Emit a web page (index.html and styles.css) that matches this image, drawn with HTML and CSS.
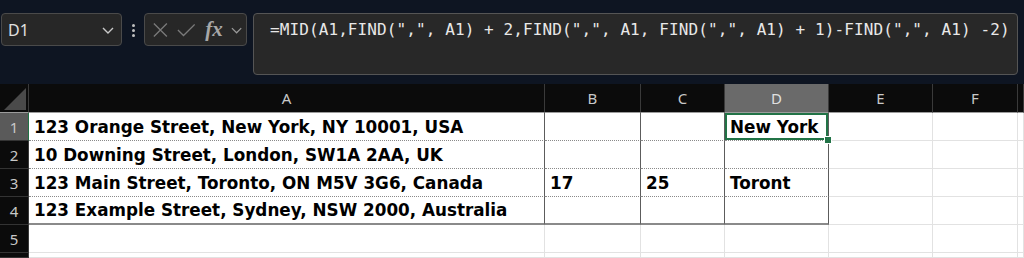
FILE: index.html
```html
<!DOCTYPE html>
<html lang="en">
<head>
   <meta charset="UTF-8" />
   <title>Sheet</title>
   <link rel="stylesheet" href="styles.css">
</head>
<body>

   <div class="topbar">
      <div class="namebox">
         <span>D1</span>
         <svg width="14" height="10" viewBox="0 0 14 10"><path d="M2 3 L7 8 L12 3" fill="none" stroke="#c8c8c8" stroke-width="1.4"/></svg>
      </div>
      <div class="dots"><i></i><i></i><i></i></div>
      <div class="fxbox">
         <svg width="18" height="18" viewBox="0 0 18 18"><path d="M2 2 L16 16 M16 2 L2 16" stroke="#7a7a7a" stroke-width="1.4"/></svg>
         <svg width="20" height="18" viewBox="0 0 20 18"><path d="M1 9 L7 15 L19 3" fill="none" stroke="#7a7a7a" stroke-width="1.4"/></svg>
         <span class="fx">fx</span>
         <svg width="12" height="10" viewBox="0 0 12 10"><path d="M1 3 L6 8 L11 3" fill="none" stroke="#9a9a9a" stroke-width="1.3"/></svg>
      </div>
      <div class="formula">=MID(A1,FIND(",", A1) + 2,FIND(",", A1, FIND(",", A1) + 1)-FIND(",", A1) -2)</div>
   </div>

   <div class="sheet">
      <div class="ch corner"><svg width="22" height="22" viewBox="0 0 22 22"><path d="M22 0 L22 22 L0 22 Z" fill="#4a4a4a"/></svg></div>
      <div class="ch">A</div>
      <div class="ch">B</div>
      <div class="ch">C</div>
      <div class="ch sel">D</div>
      <div class="ch">E</div>
      <div class="ch">F</div>
      <div class="ch"></div>

      <div class="rh sel">1</div>
      <div class="c d dot">123 Orange Street, New York, NY 10001, USA</div>
      <div class="c d dot"></div>
      <div class="c d dot"></div>
      <div class="c d dot active">New York</div>
      <div class="c"></div>
      <div class="c"></div>
      <div class="c"></div>

      <div class="rh">2</div>
      <div class="c d dot">10 Downing Street, London, SW1A 2AA, UK</div>
      <div class="c d dot"></div>
      <div class="c d dot"></div>
      <div class="c d dot"></div>
      <div class="c"></div>
      <div class="c"></div>
      <div class="c"></div>

      <div class="rh">3</div>
      <div class="c d dot">123 Main Street, Toronto, ON M5V 3G6, Canada</div>
      <div class="c d dot">17</div>
      <div class="c d dot">25</div>
      <div class="c d dot">Toront</div>
      <div class="c"></div>
      <div class="c"></div>
      <div class="c"></div>

      <div class="rh">4</div>
      <div class="c d last">123 Example Street, Sydney, NSW 2000, Australia</div>
      <div class="c d last"></div>
      <div class="c d last"></div>
      <div class="c d last"></div>
      <div class="c"></div>
      <div class="c"></div>
      <div class="c"></div>

      <div class="rh">5</div>
      <div class="c"></div>
      <div class="c"></div>
      <div class="c"></div>
      <div class="c"></div>
      <div class="c"></div>
      <div class="c"></div>
      <div class="c"></div>

      <div class="rh"></div>
      <div class="c"></div>
      <div class="c"></div>
      <div class="c"></div>
      <div class="c"></div>
      <div class="c"></div>
      <div class="c"></div>
      <div class="c"></div>
   </div>

</body>
</html>
```

FILE: styles.css
```css
* {
   margin: 0;
   padding: 0;
   box-sizing: border-box;
}
body {
   width: 1024px;
   height: 258px;
   overflow: hidden;
   background: #0e1522;
   font-family: "Noto Sans", Arial, sans-serif;
}
.topbar {
   display: flex;
   align-items: flex-start;
   height: 84px;
   padding: 13px 0 0 1px;
   background: #0e1522;
}
.namebox {
   display: flex;
   align-items: center;
   justify-content: space-between;
   width: 121px;
   height: 33px;
   padding: 0 6px 0 6px;
   background: #272727;
   border: 1px solid #4a4a4a;
   border-radius: 4px;
   color: #e0e0e0;
   font-size: 16px;
}
.dots {
   display: flex;
   flex-direction: column;
   gap: 2px;
   margin: 11px 9px 0 10px;
}
.dots i {
   display: block;
   width: 3px;
   height: 3px;
   background: #c0c0c0;
   border-radius: 50%;
}
.fxbox {
   display: flex;
   align-items: center;
   width: 103px;
   height: 33px;
   padding: 0 4px 0 7px;
   gap: 8px;
   background: #272727;
   border: 1px solid #4a4a4a;
   border-radius: 4px;
}
.fxbox .fx {
   font-family: "Liberation Serif", serif;
   font-style: italic;
   font-weight: bold;
   font-size: 21px;
   color: #a8a8a8;
   margin-left: 2px;
}
.formula {
   flex: 1;
   height: 62px;
   margin: 0 6px 0 6px;
   padding: 6px 0 0 16px;
   background: #282828;
   border: 1px solid #555;
   border-radius: 4px;
   color: #e8e8e8;
   font-family: "DejaVu Sans Mono", "Liberation Mono", monospace;
   font-size: 16px;
   letter-spacing: 0.1px;
   white-space: nowrap;
   overflow: hidden;
}
.sheet {
   display: grid;
   grid-template-columns: 29px 516px 96px 84px 104px 104px 85px 1fr;
   grid-template-rows: 29px repeat(5, 28px) 5px;
   background: #fff;
}
.ch {
   display: flex;
   align-items: center;
   justify-content: center;
   background: #0b0b0b;
   color: #c8c8c8;
   font-size: 15px;
   border-right: 1px solid #3a3a3a;
   border-bottom: 1px solid #9c9c9c;
}
.ch.corner {
   align-items: flex-end;
   justify-content: flex-end;
   padding: 0 2px 2px 0;
}
.ch.sel {
   background: #6a6a6a;
   color: #e0e0e0;
}
.rh {
   display: flex;
   align-items: center;
   justify-content: center;
   background: #0b0b0b;
   color: #c8c8c8;
   font-size: 15px;
   border-bottom: 1px solid #333;
   border-right: 1px solid #3a3a3a;
}
.rh.sel {
   background: #5a5a5a;
   border-right: 1px solid #217346;
}
.c {
   display: flex;
   align-items: center;
   padding-left: 5px;
   background: #fff;
   border-right: 1px solid #e2e2e2;
   border-bottom: 1px solid #e2e2e2;
   color: #000;
   font-family: "DejaVu Sans", "Noto Sans", sans-serif;
   font-weight: bold;
   font-size: 16.8px;
   white-space: nowrap;
   overflow: hidden;
}
.c.d {
   border-right: 1px solid #5c5c5c;
}
.c.dot {
   border-bottom: 1px dotted #8a8a8a;
}
.c.last {
   border-bottom: 2px solid #8a8a8a;
}
.c.active {
   position: relative;
   overflow: visible;
   box-shadow: inset 0 0 0 2px #217346;
}
.c.active::after {
   content: "";
   position: absolute;
   right: -4px;
   bottom: -4px;
   width: 6px;
   height: 6px;
   background: #217346;
   border: 1px solid #fff;
}
```
